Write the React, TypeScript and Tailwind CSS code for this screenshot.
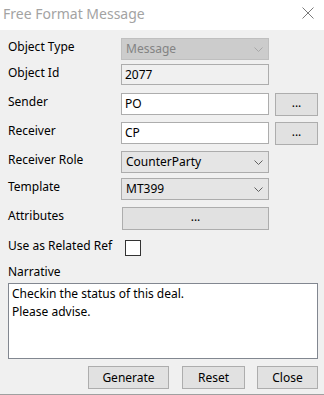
import React from 'react';

const font = { fontFamily: '"Noto Sans", "Open Sans", Arial, sans-serif' };

const Chevron = ({ color }: { color: string }) => (
  <svg width="9" height="5" viewBox="0 0 9 5" className="shrink-0">
    <path d="M0.5 0.5 L4.5 4.5 L8.5 0.5" fill="none" stroke={color} strokeWidth="1" />
  </svg>
);

const Label = ({ text }: { text: string }) => (
  <div className="w-[113px] shrink-0 text-[12px] leading-[16px] text-black pt-[1px]">{text}</div>
);

const DotsButton = ({ className }: { className: string }) => (
  <div className={`border border-[#adadad] bg-[#e1e1e1] flex items-center justify-center text-[12px] text-black leading-none pb-[3px] ${className}`}>
    ...
  </div>
);

const App = () => {
  return (
    <div className="w-[324px] h-[395px] bg-[#f0f0f0] border-b border-[#a0a0a0] flex flex-col overflow-hidden" style={font}>
      <div className="h-[30px] bg-white flex items-center justify-between pl-[3px] pr-[10px] shrink-0">
        <span className="text-[14px] text-[#a3a3a3] leading-none pb-[3px]">Free Format Message</span>
        <svg width="12" height="12" viewBox="0 0 12 12" className="mb-[5px]">
          <path d="M0.5 0.5 L11.5 11.5 M11.5 0.5 L0.5 11.5" stroke="#7a7a7a" strokeWidth="1" />
        </svg>
      </div>

      <div className="pl-[8px] pr-[6px] pt-[8px] flex flex-col">
        <div className="flex h-[22px]">
          <Label text="Object Type" />
          <div className="w-[148px] border border-[#bfbfbf] bg-[#cccccc] flex items-center justify-between pl-[4px] pr-[5px]">
            <span className="text-[12px] text-[#838383]">Message</span>
            <Chevron color="#a8a8a8" />
          </div>
        </div>

        <div className="flex h-[21px] mt-[4px]">
          <Label text="Object Id" />
          <div className="w-[148px] border border-[#adadad] bg-[#f0f0f0] flex items-center pl-[3px]">
            <span className="text-[12px] text-black">2077</span>
          </div>
        </div>

        <div className="flex h-[22px] mt-[8px]">
          <Label text="Sender" />
          <div className="w-[148px] border border-[#adadad] bg-white flex items-center pl-[3px]">
            <span className="text-[12px] text-black">PO</span>
          </div>
          <DotsButton className="w-[43px] ml-[6px] h-[23px]" />
        </div>

        <div className="flex h-[22px] mt-[7px]">
          <Label text="Receiver" />
          <div className="w-[148px] border border-[#adadad] bg-white flex items-center pl-[3px]">
            <span className="text-[12px] text-black">CP</span>
          </div>
          <DotsButton className="w-[43px] ml-[6px] h-[23px]" />
        </div>

        <div className="flex h-[22px] mt-[7px]">
          <Label text="Receiver Role" />
          <div className="w-[148px] border border-[#acacac] bg-[#e5e5e5] flex items-center justify-between pl-[4px] pr-[5px]">
            <span className="text-[12px] text-black">CounterParty</span>
            <Chevron color="#606060" />
          </div>
        </div>

        <div className="flex h-[22px] mt-[5px]">
          <Label text="Template" />
          <div className="w-[148px] border border-[#acacac] bg-[#e5e5e5] flex items-center justify-between pl-[4px] pr-[5px]">
            <span className="text-[12px] text-black">MT399</span>
            <Chevron color="#606060" />
          </div>
        </div>

        <div className="flex h-[23px] mt-[7px]">
          <Label text="Attributes" />
          <DotsButton className="w-[147px] ml-[1px]" />
        </div>

        <div className="flex items-center mt-[10px] h-[16px]">
          <div className="w-[117px] shrink-0 text-[12px] leading-[16px] text-black mb-[4px]">Use as Related Ref</div>
          <div className="w-[16px] h-[16px] border border-[#333333] bg-white" />
        </div>

        <div className="text-[12px] leading-[16px] text-black mt-[8px]">Narrative</div>

        <div className="mt-[3px] w-[310px] h-[76px] shrink-0 border border-[#828790] bg-white px-[3px] pt-[1px] text-[12px] leading-[18px] text-black">
          <div>Checkin the status of this deal.</div>
          <div>Please advise.</div>
        </div>

        <div className="flex mt-[7px] h-[23px] shrink-0 text-[12px] text-black">
          <div className="ml-[80px] w-[81px] border border-[#adadad] bg-[#e1e1e1] flex items-center justify-center">Generate</div>
          <div className="ml-[13px] w-[63px] border border-[#adadad] bg-[#e1e1e1] flex items-center justify-center">Reset</div>
          <div className="ml-[12px] w-[61px] border border-[#adadad] bg-[#e1e1e1] flex items-center justify-center">Close</div>
        </div>
      </div>
    </div>
  );
};

export default App;
